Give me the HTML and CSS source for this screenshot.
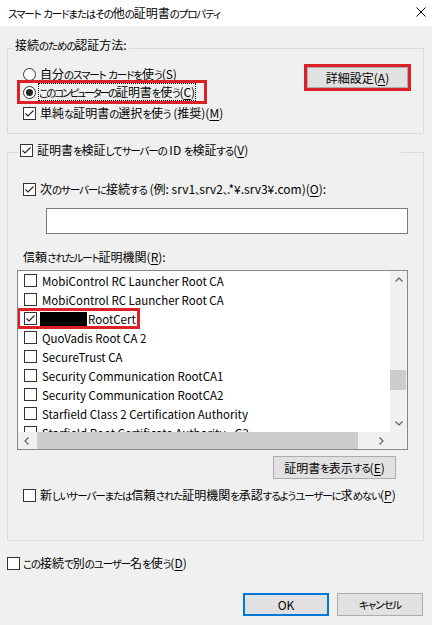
FILE: index.html
```html
<!DOCTYPE html>
<html lang="ja">
<head>
<meta charset="utf-8">
<title>スマート カードまたはその他の証明書のプロパティ</title>
<link rel="stylesheet" href="styles.css">
</head>
<body>
<div class="window">
  <div class="titlebar">
    <span class="title"><span class="k">スマート</span> <span class="k">カードまたはその</span>他<span class="k">の</span>証明書<span class="k">のプロパティ</span></span>
    <svg class="close" width="10" height="10" viewBox="0 0 10 10"><path d="M0.5 0.5 L9.5 9.5 M9.5 0.5 L0.5 9.5" stroke="#000" stroke-width="1" fill="none"/></svg>
  </div>
  <div class="content">
    <div class="group g1">
      <div class="legend">接続<span class="k">のための</span>認証方法:</div>
      <div class="g1-body">
        <div class="options">
          <div class="opt"><span class="radio"></span><span>自分<span class="k">のスマート</span> <span class="k">カードを</span>使<span class="k">う</span>(<u>S</u>)</span></div>
          <div class="opt hl"><span class="radio on"></span><span class="focus"><span class="k kt">このコンピューターの</span>証明書<span class="k">を</span>使<span class="k">う</span>(<u>C</u>)</span></div>
          <div class="opt opt3"><span class="cb"><svg width="11" height="11" viewBox="0 0 11 11"><path d="M1.5 5.5 L4 8 L9.5 2.5" stroke="#222" stroke-width="1.1" fill="none"/></svg></span><span>単純<span class="k">な</span>証明書<span class="k">の</span>選択<span class="k">を</span>使<span class="k">う</span> (推奨)(<u>M</u>)</span></div>
        </div>
        <div class="btn btn-adv">詳細設定(<u>A</u>)</div>
      </div>
    </div>

    <div class="group g2">
      <div class="legend legend2"><span class="cb"><svg width="11" height="11" viewBox="0 0 11 11"><path d="M1.5 5.5 L4 8 L9.5 2.5" stroke="#222" stroke-width="1.1" fill="none"/></svg></span><span>証明書<span class="k">を</span>検証<span class="k">してサーバーの</span> ID <span class="k">を</span>検証<span class="k">する</span>(<u>V</u>)</span></div>
      <div class="opt row-srv"><span class="cb"><svg width="11" height="11" viewBox="0 0 11 11"><path d="M1.5 5.5 L4 8 L9.5 2.5" stroke="#222" stroke-width="1.1" fill="none"/></svg></span><span>次<span class="k">のサーバーに</span>接続<span class="k">する</span> (例: srv1<span class="k">、</span>srv2<span class="k">、</span>.*¥.srv3¥.com)(<u>O</u>):</span></div>
      <div class="input"></div>
      <div class="label-ca">信頼<span class="k">されたルート</span>証明機関(<u>R</u>):</div>
      <div class="list">
        <div class="items">
          <div class="item"><span class="item-in"><span class="cb"></span><span>MobiControl RC Launcher Root CA</span></span></div>
          <div class="item"><span class="item-in"><span class="cb"></span><span>MobiControl RC Launcher Root CA</span></span></div>
          <div class="item"><span class="item-in sel"><span class="cb"><svg width="11" height="11" viewBox="0 0 11 11"><path d="M1.5 5.5 L4 8 L9.5 2.5" stroke="#222" stroke-width="1.1" fill="none"/></svg></span><span class="redact"></span><span class="rc">RootCert</span></span></div>
          <div class="item"><span class="item-in"><span class="cb"></span><span>QuoVadis Root CA 2</span></span></div>
          <div class="item"><span class="item-in"><span class="cb"></span><span>SecureTrust CA</span></span></div>
          <div class="item"><span class="item-in"><span class="cb"></span><span>Security Communication RootCA1</span></span></div>
          <div class="item"><span class="item-in"><span class="cb"></span><span>Security Communication RootCA2</span></span></div>
          <div class="item"><span class="item-in"><span class="cb"></span><span>Starfield Class 2 Certification Authority</span></span></div>
          <div class="item"><span class="item-in"><span class="cb"></span><span>Starfield Root Certificate Authority - G2</span></span></div>
        </div>
        <div class="vscroll">
          <div class="arrow"><svg width="8" height="5" viewBox="0 0 8 5"><path d="M0.5 4.5 L4 1 L7.5 4.5" stroke="#606060" stroke-width="1.2" fill="none"/></svg></div>
          <div class="vtrack"><div class="vthumb"></div></div>
          <div class="arrow"><svg width="8" height="5" viewBox="0 0 8 5"><path d="M0.5 0.5 L4 4 L7.5 0.5" stroke="#606060" stroke-width="1.2" fill="none"/></svg></div>
        </div>
        <div class="hscroll">
          <div class="arrow"><svg width="5" height="8" viewBox="0 0 5 8"><path d="M4.5 0.5 L1 4 L4.5 7.5" stroke="#606060" stroke-width="1.2" fill="none"/></svg></div>
          <div class="htrack"><div class="hthumb"></div></div>
          <div class="arrow"><svg width="5" height="8" viewBox="0 0 5 8"><path d="M0.5 0.5 L4 4 L0.5 7.5" stroke="#606060" stroke-width="1.2" fill="none"/></svg></div>
        </div>
        <div class="corner"></div>
      </div>
      <div class="btn btn-view">証明書<span class="k">を</span>表示<span class="k">する</span>(<u>E</u>)</div>
      <div class="opt row-trust"><span class="cb"></span><span>新<span class="k">しいサーバーまたは</span>信頼<span class="k">された</span>証明機関<span class="k">を</span>承認<span class="k">するようユーザーに</span>求<span class="k">めない</span>(<u>P</u>)</span></div>
    </div>

    <div class="opt row-user"><span class="cb"></span><span><span class="k">この</span>接続<span class="k">で</span>別<span class="k">のユーザー</span>名<span class="k">を</span>使<span class="k">う</span>(<u>D</u>)</span></div>

    <div class="footer">
      <div class="btn btn-ok">OK</div>
      <div class="btn btn-cancel"><span class="k">キャンセル</span></div>
    </div>
  </div>
</div>
</body>
</html>
```

FILE: styles.css
```css
* { box-sizing: border-box; }
html, body { margin: 0; padding: 0; }
body {
  width: 432px;
  height: 625px;
  overflow: hidden;
  background: #f0f0f0;
  color: #000;
  font-family: "Noto Sans CJK JP", "Noto Sans", sans-serif;
  font-size: 12px;
  line-height: 16px;
  font-feature-settings: "palt";
}
u { text-decoration: underline; text-underline-offset: 2px; text-decoration-thickness: 1px; }
.k { font-size: 10.5px; letter-spacing: -1.1px; }
.k.kt { letter-spacing: -2px; }

.titlebar {
  height: 26px;
  background: #fff;
  display: flex;
  align-items: center;
  justify-content: space-between;
  padding: 0 6px 0 8px;
}
.title { line-height: 16px; white-space: nowrap; }
.close { display: block; margin-top: -3px; }

.content { padding: 0 8px 0 7px; }

.group { border: 1px solid #dcdcdc; }
.legend {
  background: #f0f0f0;
  line-height: 16px;
  width: fit-content;
}
.g1 { margin-top: 22px; padding-bottom: 11px; }
.g1 .legend { margin: -12px 0 0 5px; padding: 0 2px; }
.g1-body { display: flex; justify-content: space-between; align-items: flex-start; margin-top: 11px; }
.options { display: flex; flex-direction: column; padding-left: 12px; }

.opt { display: flex; align-items: center; height: 18px; padding-left: 3px; gap: 4px; white-space: nowrap; }
.opt.hl { outline: 3px solid #dd1f26; width: 184px; gap: 3px; }
.opt3 { margin-top: 3px; }
.focus { outline: 1px dotted #000; outline-offset: 0; line-height: 15px; letter-spacing: -0.2px; }

.radio {
  width: 13px; height: 13px; flex: none;
  border: 1px solid #333; border-radius: 50%; background: #fff;
  display: flex; align-items: center; justify-content: center;
}
.radio.on::after { content: ""; width: 7px; height: 7px; border-radius: 50%; background: #222; }
.cb {
  width: 13px; height: 13px; flex: none;
  border: 1px solid #333; background: #fff;
  display: flex; align-items: center; justify-content: center;
}
.cb svg { display: block; }

.btn {
  background: #e1e1e1;
  border: 1px solid #adadad;
  display: flex; align-items: center; justify-content: center;
  white-space: nowrap;
}
.btn-adv { width: 101px; height: 21px; margin: 2px 15px 0 0; outline: 3px solid #dd1f26; }

.g2 { margin-top: 18px; padding-bottom: 36px; }
.legend2 { margin: -11px 0 0 10px; padding-left: 2px; width: 383px; display: flex; align-items: center; gap: 4px; white-space: nowrap; }
.row-srv { margin-top: 21px; padding-left: 15px; }
.input { margin: 10px 0 0 38px; width: 362px; height: 26px; border: 1px solid #7a7a7a; background: #fff; }
.label-ca { margin: 15px 0 0 15px; }

.list {
  margin: 4px 0 0 9px;
  width: 391px; height: 180px;
  border: 1px solid #828790;
  background: #fff;
  display: grid;
  grid-template-columns: 1fr 17px;
  grid-template-rows: 1fr 17px;
  font-size: 11.5px;
}
.items { overflow: hidden; min-width: 0; }
.item { height: 19px; display: flex; align-items: center; }
.item-in { display: flex; align-items: center; gap: 5px; height: 15px; margin-left: 2px; padding: 0 1px 0 4px; white-space: nowrap; }
.item-in.sel { outline: 3px solid #dd1f26; }
.redact { width: 47px; height: 14px; background: #000; margin-left: -2px; }
.rc { margin-left: -4px; }

.vscroll { background: #f0f0f0; display: flex; flex-direction: column; }
.hscroll { background: #f0f0f0; display: flex; }
.corner { background: #f0f0f0; }
.arrow { width: 17px; height: 17px; flex: none; display: flex; align-items: center; justify-content: center; }
.arrow svg { display: block; }
.vtrack { flex: 1; }
.vthumb { width: 16px; height: 20px; margin: 82px 0 0 0; background: #cdcdcd; }
.htrack { flex: 1; }
.hthumb { height: 17px; width: 321px; margin-left: 2px; background: #cdcdcd; }

.btn-view { width: 123px; height: 23px; margin: 6px 27px 0 auto; }
.row-trust { margin-top: 7px; padding-left: 15px; }

.row-user { margin-top: 13px; padding-left: 0; gap: 3px; }

.footer { display: flex; justify-content: flex-end; gap: 8px; margin-top: 21px; padding-right: 1px; }
.btn-ok { width: 86px; height: 23px; border: 2px solid #0078d7; }
.btn-cancel { width: 86px; height: 23px; }
```
